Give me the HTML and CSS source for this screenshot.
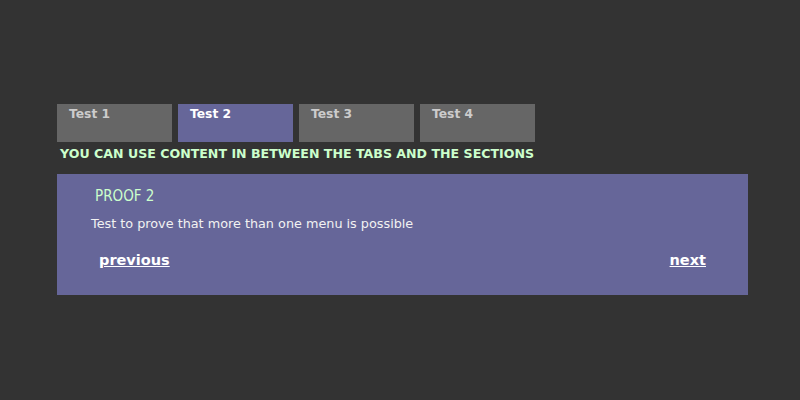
FILE: index.html
```html
<!DOCTYPE html>
<html>
<head>
<meta charset="utf-8">
<link rel="stylesheet" href="styles.css">
</head>
<body>
<div class="wrap">
  <div class="tabs">
    <div class="tab">Test 1</div>
    <div class="tab active">Test 2</div>
    <div class="tab">Test 3</div>
    <div class="tab">Test 4</div>
  </div>
  <div class="between">YOU CAN USE CONTENT IN BETWEEN THE TABS AND THE SECTIONS</div>
  <div class="panel">
    <div class="title">PROOF 2</div>
    <p class="text">Test to prove that more than one menu is possible</p>
    <div class="nav">
      <a class="link" href="#">previous</a>
      <a class="link" href="#">next</a>
    </div>
  </div>
</div>
</body>
</html>
```
FILE: styles.css
```css
html, body {
  margin: 0;
  padding: 0;
  background: #333333;
  font-family: "DejaVu Sans", Verdana, sans-serif;
}
.wrap {
  padding: 104px 52px 0 57px;
}
.tabs {
  display: flex;
  gap: 6px;
}
.tab {
  width: 103px;
  height: 36px;
  padding: 2px 0 0 12px;
  background: #666666;
  color: #cccccc;
  font-weight: bold;
  font-size: 12.3px;
  line-height: 16px;
}
.tab.active {
  background: #666699;
  color: #ffffff;
}
.between {
  margin-top: 4px;
  padding-left: 3px;
  color: #ccffcc;
  font-weight: bold;
  font-size: 12.6px;
  line-height: 16px;
  height: 28px;
}
.panel {
  background: #666699;
  height: 121px;
  box-sizing: border-box;
  padding: 13px 42px 0 34px;
}
.title {
  color: #ccffcc;
  font-family: "DejaVu Sans Condensed", "DejaVu Sans", sans-serif;
  font-size: 15px;
  line-height: 18px;
  padding-left: 4px;
}
.text {
  margin: 10px 0 0 0;
  color: #f2f2f2;
  font-size: 12.8px;
  line-height: 17px;
}
.nav {
  display: flex;
  justify-content: space-between;
  margin-top: 19px;
  padding-left: 8px;
}
.link {
  color: #ffffff;
  font-weight: bold;
  font-size: 14.5px;
  line-height: 18px;
}
```
